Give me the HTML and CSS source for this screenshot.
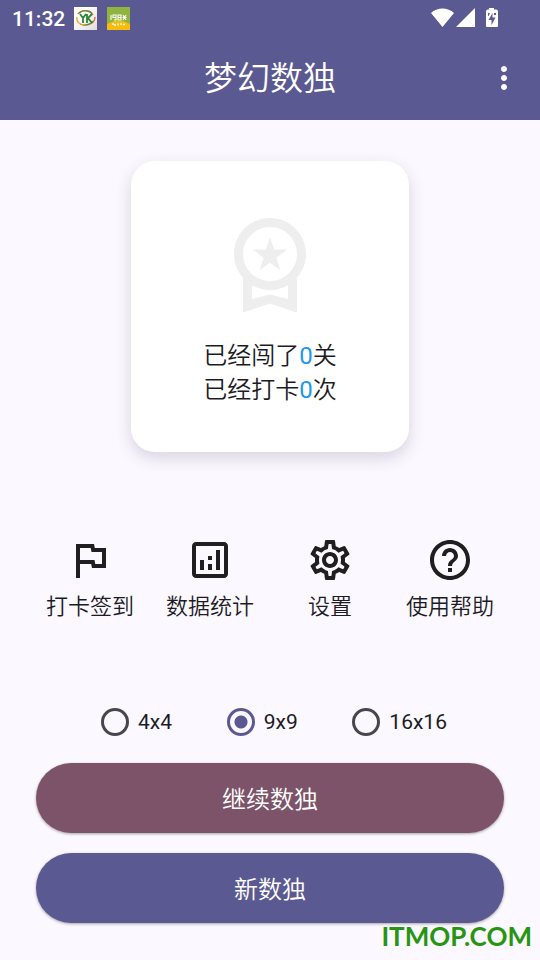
FILE: index.html
```html
<!DOCTYPE html>
<html lang="zh-CN">
<head>
<meta charset="utf-8">
<meta name="viewport" content="width=device-width, initial-scale=1">
<title>梦幻数独</title>
<link rel="stylesheet" href="styles.css">
</head>
<body>
<header class="top">
  <div class="status">
    <span class="clock">11:32</span>
    <svg class="app-icon" viewBox="0 0 23 23" aria-hidden="true">
      <defs><linearGradient id="paper" x1="0" y1="0" x2="1" y2="1"><stop offset="0.300" stop-color="#fff"/><stop offset="1" stop-color="#ddd"/></linearGradient></defs>
      <path fill="url(#paper)" d="M0 0h23v23H0z"/>
      <path d="M4 7C8 2 16 3 19 8M21 10c0 5-5 9-12 8" fill="none" stroke="#e8622c" stroke-width="1.300"/>
      <path d="M5 6c4-3 10-3 13 0M19 14c-3 4-9 5-13 3" fill="none" stroke="#3f9a3c" stroke-width="1.200"/>
      <path d="M3 10c-1 5 3 8 8 8" fill="none" stroke="#f2a32c" stroke-width="1.300"/>
      <path d="M6 7l3 4v5M12 7l-3 4M13 7v9M18 7l-4 4 4 5" fill="none" stroke="#2f8636" stroke-width="1.800"/>
    </svg>
    <svg class="app-icon app-icon-second" viewBox="0 0 23 23" aria-hidden="true">
      <path fill="#8fb53e" d="M0 0h23v23H0z"/>
      <path fill="#f8bd0c" d="M0 17l7-3h9l7 3v6H0z"/>
      <path d="M4 8v5M6 8h3v2.500H6zM9 8v5H7M11 8h3v5h-3zM11 10.500h3M16 8l3 5M19 8l-3 5M15.500 10.500h4" fill="none" stroke="#fff" stroke-width="1.100"/>
      <path d="M5 17h2M7 18h2M11 16.500v2M13 17h2M16 17.500h2" fill="none" stroke="#fff" stroke-width="1.300"/>
    </svg>
    <span class="spacer"></span>
    <svg class="signals" viewBox="0 0 68 20" aria-hidden="true" fill="#fff">
      <path d="M0 5C6-1 17-1 23 5L11.500 19zM25 19L44 0v19z"/>
      <path fill-rule="evenodd" d="M58 0h5v1.500h2q2 0 2 2V18q0 1-1 1H56q-1 0-1-1V3.500q0-2 2-2h1zM61.500 5L57.500 12h3v5L64.500 9.500h-3zM57 5h2l-1.500 3H57zM63 5h2v2h-2z"/>
    </svg>
  </div>
  <div class="bar">
    <h1>梦幻数独</h1>
    <button class="menu" type="button" aria-label="菜单"><svg viewBox="0 0 24 24"><path d="M12 8c1.100 0 2-.9 2-2s-.9-2-2-2-2 .9-2 2 .9 2 2 2zm0 2c-1.100 0-2 .9-2 2s.9 2 2 2 2-.9 2-2-.9-2-2-2zm0 6c-1.100 0-2 .9-2 2s.9 2 2 2 2-.9 2-2-.9-2-2-2z"/></svg></button>
  </div>
</header>
<main>
  <section class="card">
    <svg class="medal" viewBox="0 0 24 24" aria-hidden="true"><path d="M9.680 13.690 12 11.930l2.310 1.760-.88-2.850L15.750 9h-2.840L12 6.190 11.090 9H8.250l2.310 1.840-.88 2.850zM20 10c0-4.420-3.580-8-8-8s-8 3.580-8 8c0 2.030.76 3.870 2 5.280V23l6-2 6 2v-7.720c1.240-1.410 2-3.250 2-5.280zm-8-6c3.310 0 6 2.690 6 6s-2.690 6-6 6-6-2.690-6-6 2.690-6 6-6zm0 15-4 1.020v-3.100c1.180.68 2.540 1.080 4 1.080s2.820-.4 4-1.080v3.100L12 19z"/></svg>
    <p>已经闯了<span class="count">0</span>关</p>
    <p>已经打卡<span class="count">0</span>次</p>
  </section>
  <nav class="actions">
    <button type="button"><svg viewBox="0 0 24 24" aria-hidden="true"><path d="M12.360 6l.4 2H18v6h-3.360l-.4-2H7V6h5.360M14 4H5v17h2v-7h5.600l.4 2h7V6h-5.600L14 4z"/></svg><span>打卡签到</span></button>
    <button type="button"><svg viewBox="0 0 24 24" aria-hidden="true"><path d="M19 3H5c-1.100 0-2 .9-2 2v14c0 1.100.9 2 2 2h14c1.100 0 2-.9 2-2V5c0-1.100-.9-2-2-2zm0 16H5V5h14v14zM7 12h2v5H7zM15 7h2v10h-2zM11 14h2v3h-2zM11 10h2v2h-2z"/></svg><span>数据统计</span></button>
    <button type="button"><svg viewBox="0 0 24 24" aria-hidden="true"><path d="M19.430 12.980c.04-.32.07-.64.07-.98 0-.34-.03-.66-.07-.98l2.110-1.650c.19-.15.24-.42.12-.64l-2-3.460c-.09-.16-.26-.25-.44-.25-.06 0-.12.01-.17.03l-2.490 1c-.52-.4-1.080-.73-1.690-.98l-.38-2.650C14.460 2.180 14.250 2 14 2h-4c-.25 0-.46.18-.49.42l-.38 2.650c-.61.25-1.170.59-1.690.98l-2.490-1c-.06-.02-.12-.03-.18-.03-.17 0-.34.09-.43.25l-2 3.460c-.13.22-.07.49.12.64l2.110 1.650c-.04.32-.07.65-.07.98 0 .33.03.66.07.98l-2.110 1.650c-.19.15-.24.42-.12.64l2 3.460c.09.16.26.25.44.25.06 0 .12-.01.17-.03l2.490-1c.52.4 1.080.73 1.690.98l.38 2.650c.03.24.24.42.49.42h4c.25 0 .46-.18.49-.42l.38-2.650c.61-.25 1.170-.59 1.690-.98l2.490 1c.06.02.12.03.18.03.17 0 .34-.09.43-.25l2-3.460c.12-.22.07-.49-.12-.64l-2.110-1.650zm-1.980-1.710c.04.31.05.52.05.73 0 .21-.02.43-.05.73l-.14 1.130.89.7 1.080.84-.7 1.210-1.270-.51-1.040-.42-.9.68c-.43.32-.84.56-1.250.73l-1.060.43-.16 1.130-.2 1.350h-1.400l-.19-1.350-.16-1.130-1.060-.43c-.43-.18-.83-.41-1.230-.71l-.91-.7-1.060.43-1.270.51-.7-1.210 1.080-.84.89-.7-.14-1.130c-.03-.31-.05-.54-.05-.74s.02-.43.05-.73l.14-1.130-.89-.7-1.080-.84.7-1.210 1.270.51 1.040.42.9-.68c.43-.32.84-.56 1.250-.73l1.060-.43.16-1.130.2-1.350h1.390l.19 1.350.16 1.130 1.060.43c.43.18.83.41 1.230.71l.91.7 1.060-.43 1.270-.51.7 1.210-1.070.85-.89.7.14 1.130zM12 8c-2.210 0-4 1.790-4 4s1.790 4 4 4 4-1.790 4-4-1.790-4-4-4zm0 6c-1.100 0-2-.9-2-2s.9-2 2-2 2 .9 2 2-.9 2-2 2z"/></svg><span>设置</span></button>
    <button type="button"><svg viewBox="0 0 24 24" aria-hidden="true"><path d="M11 18h2v-2h-2v2zm1-16C6.480 2 2 6.480 2 12s4.480 10 10 10 10-4.480 10-10S17.520 2 12 2zm0 18c-4.410 0-8-3.590-8-8s3.590-8 8-8 8 3.590 8 8-3.590 8-8 8zm0-14c-2.210 0-4 1.790-4 4h2c0-1.100.9-2 2-2s2 .9 2 2c0 2-3 1.750-3 5h2c0-2.250 3-2.500 3-5 0-2.210-1.790-4-4-4z"/></svg><span>使用帮助</span></button>
  </nav>
  <form class="play">
    <div class="sizes">
      <label><input type="radio" name="size" value="4"><span>4x4</span></label>
      <label><input type="radio" name="size" value="9" checked><span>9x9</span></label>
      <label><input type="radio" name="size" value="16"><span>16x16</span></label>
    </div>
    <button class="pill continue" type="button">继续数独</button>
    <button class="pill" type="button">新数独</button>
  </form>
</main>
<div class="watermark">ITMOP.COM</div>
</body>
</html>
```

FILE: styles.css
```css
* { box-sizing: border-box; }

body {
  margin: 0;
  min-height: 100vh;
  position: relative;
  background: #fbf8ff;
  color: #1c1b1f;
  font-family: Roboto, "Noto Sans CJK SC", sans-serif;
  font-weight: 350;
}

button {
  border: 0;
  padding: 0;
  background: none;
  color: inherit;
  font: inherit;
}

svg { display: block; }

.top {
  background: #5b5992;
  color: #fff;
}

.status {
  display: flex;
  align-items: center;
  height: 36px;
  padding: 0 41px 0 12px;
}

.clock {
  font-size: 21px;
  font-weight: 500;
  line-height: 36px;
  padding-top: 2px;
  margin-right: 9px;
}

.app-icon { width: 23px; height: 23px; }
.app-icon-second { margin-left: 10px; }
.spacer { flex: 1; }
.signals { width: 68px; height: 20px; }

.bar {
  display: grid;
  grid-template-columns: 72px 1fr 72px;
  align-items: center;
  height: 84px;
}

h1 {
  grid-column: 2;
  margin: 0;
  padding-top: 2px;
  text-align: center;
  font-size: 33px;
  font-weight: 350;
  line-height: 48px;
}

.menu {
  width: 36px;
  height: 36px;
  justify-self: center;
}

.menu svg { fill: #fff; }

main { padding: 41px 36px 36px; }

.card {
  width: fit-content;
  margin: 0 auto;
  padding: 48px 72px 45px;
  border-radius: 24px;
  background: #fff;
  box-shadow: 0 6px 16px rgba(60, 50, 90, 0.18);
  text-align: center;
}

.medal {
  width: 108px;
  height: 108px;
  margin: 0 auto 22px;
  fill: #eee;
}

.card p {
  margin: 0;
  font-size: 24px;
  line-height: 34px;
}

.count {
  color: #2196f3;
  font-weight: 400;
}

.actions {
  display: grid;
  grid-template-columns: repeat(4, 1fr);
  margin: 84px -6px 0;
}

.actions button {
  display: flex;
  flex-direction: column;
  align-items: center;
  gap: 7px;
  font-size: 22px;
  line-height: 32px;
}

.actions svg {
  width: 48px;
  height: 48px;
  fill: #1f1f1f;
}

.sizes {
  display: flex;
  justify-content: space-between;
  margin: 79px 57px 21px 65px;
  font-size: 21px;
  font-weight: 400;
}

.sizes label {
  display: flex;
  align-items: center;
  gap: 9px;
  height: 40px;
}

.sizes input {
  appearance: none;
  width: 28px;
  height: 28px;
  margin: 0;
  border: 3px solid #49454f;
  border-radius: 50%;
}

.sizes input:checked {
  border-color: #5b5992;
  background: radial-gradient(circle, #5b5992 6px, transparent 7px);
}

.pill {
  display: block;
  width: 100%;
  height: 70px;
  padding-bottom: 2px;
  border-radius: 35px;
  background: #5b5992;
  color: #fff;
  font-size: 24px;
  box-shadow: 0 1px 3px rgba(0, 0, 0, 0.35);
}

.continue {
  margin-bottom: 20px;
  background: #7c5368;
}

.watermark {
  position: absolute;
  right: 8px;
  bottom: 6px;
  color: #279511;
  font: 700 26px/36px Lato, sans-serif;
}
```
